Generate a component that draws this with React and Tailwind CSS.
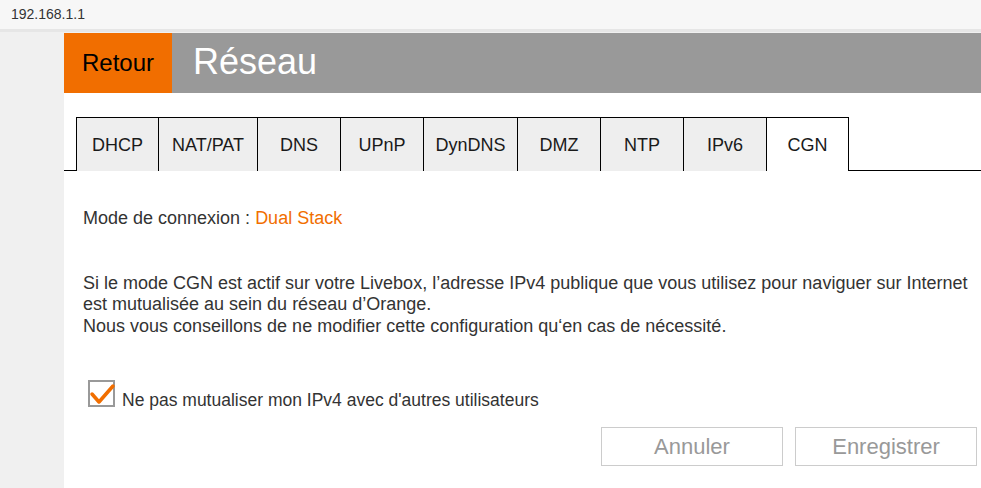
import { useState } from 'react';

const tabs = [
  { label: 'DHCP', w: 'w-[83px]' },
  { label: 'NAT/PAT', w: 'w-[99px]' },
  { label: 'DNS', w: 'w-[83px]' },
  { label: 'UPnP', w: 'w-[83px]' },
  { label: 'DynDNS', w: 'w-[94px]' },
  { label: 'DMZ', w: 'w-[83px]' },
  { label: 'NTP', w: 'w-[83px]' },
  { label: 'IPv6', w: 'w-[83px]' },
  { label: 'CGN', w: 'w-[82px]' },
];

const App = () => {
  const [active, setActive] = useState('CGN');
  const [checked, setChecked] = useState(true);

  return (
    <div className="min-h-[488px] bg-[#f0f0f0] font-['Liberation_Sans',Arial,sans-serif]">
      {/* barre d'adresse */}
      <div className="h-[29px] bg-[#f7f7f7] px-[11px] flex items-center text-[14px] text-[#333]">
        192.168.1.1
      </div>
      <div className="h-[4px] bg-[#e6e6e6] border-b border-[#f0f0f0]"></div>

      <div className="flex">
        <div className="w-[64px] shrink-0"></div>
        <div className="flex-1 bg-white min-h-[455px]">
          {/* en-tête */}
          <div className="flex h-[60px]">
            <button className="w-[108px] bg-[#f16e00] text-black text-[24px] flex items-center justify-center">
              Retour
            </button>
            <div className="flex-1 bg-[#999999] text-white text-[36px] flex items-center pl-[21px] pb-[2px]">
              Réseau
            </div>
          </div>

          {/* onglets */}
          <div className="flex h-[54px] mt-[24px]">
            <div className="w-[12px] border-b border-black"></div>
            {tabs.map((tab, i) => {
              const isActive = tab.label === active;
              return (
                <button
                  key={tab.label}
                  onClick={() => setActive(tab.label)}
                  className={`${tab.w} h-full border-t border-r border-black ${i === 0 ? 'border-l' : ''} ${
                    isActive ? 'bg-white' : 'bg-[#eeeeee]'
                  } text-[18px] text-[#1a1a1a] flex items-center justify-center pt-px`}
                >
                  {tab.label}
                </button>
              );
            })}
            <div className="flex-1 border-b border-black"></div>
          </div>

          {/* contenu */}
          <div className="pl-[19px] pr-[4px] text-[18px] leading-[21.6px] text-[#333]">
            <p className="mt-[37px]">
              Mode de connexion : <span className="text-[#f16e00]">Dual Stack</span>
            </p>
            <p className="mt-[43px]">
              Si le mode CGN est actif sur votre Livebox, l’adresse IPv4 publique que vous utilisez pour naviguer sur Internet est mutualisée au sein du réseau d’Orange.
              <br />
              Nous vous conseillons de ne modifier cette configuration qu‘en cas de nécessité.
            </p>

            <label className="flex items-start mt-[43px] cursor-pointer">
              <span
                className="relative w-[27px] h-[27px] ml-[5px] border-2 border-[#999] bg-white shrink-0"
                onClick={() => setChecked(!checked)}
              >
                {checked && (
                  <svg className="absolute -left-[2px] -top-[2px] w-[27px] h-[27px] overflow-visible" viewBox="0 0 27 27">
                    <path d="M4 14 L11 22 L25 6" fill="none" stroke="#f16e00" strokeWidth="3.5" strokeLinecap="round" strokeLinejoin="round" />
                  </svg>
                )}
              </span>
              <span className="ml-[7px] mt-[10px] text-[17.5px]">Ne pas mutualiser mon IPv4 avec d'autres utilisateurs</span>
            </label>

            <div className="flex justify-end gap-[12px] mt-[15px]">
              <button className="w-[182px] h-[39px] border border-[#cccccc] text-[22px] text-[#999] bg-white">
                Annuler
              </button>
              <button className="w-[182px] h-[39px] border border-[#cccccc] text-[22px] text-[#999] bg-white">
                Enregistrer
              </button>
            </div>
          </div>
        </div>
      </div>
    </div>
  );
};

export default App;
